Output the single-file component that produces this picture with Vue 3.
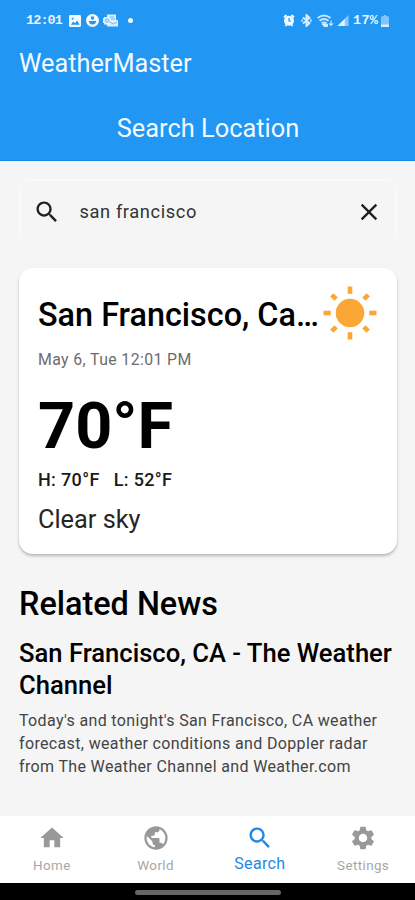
<script setup>
const rays = [0, 45, 90, 135, 180, 225, 270, 315]
const paths = {
  home: 'M10 20v-6h4v6h5v-8h3L12 3 2 12h3v8z',
  world: 'M12 2C6.48 2 2 6.48 2 12s4.48 10 10 10 10-4.48 10-10S17.52 2 12 2zm-1 17.93c-3.95-.49-7-3.85-7-7.93 0-.62.08-1.21.21-1.79L9 15v1c0 1.1.9 2 2 2v1.93zm6.9-2.54c-.26-.81-1-1.39-1.9-1.39h-1v-3c0-.55-.45-1-1-1H8v-2h2c.55 0 1-.45 1-1V7h2c1.1 0 2-.9 2-2v-.41c2.93 1.19 5 4.06 5 7.41 0 2.08-.8 3.97-2.1 5.39z',
  search: 'M15.5 14h-.79l-.28-.27C15.41 12.59 16 11.11 16 9.5 16 5.91 13.09 3 9.5 3S3 5.91 3 9.5 5.91 16 9.5 16c1.61 0 3.09-.59 4.23-1.57l.27.28v.79l5 4.99L20.49 19l-4.99-5zm-6 0C7.01 14 5 11.99 5 9.5S7.01 5 9.5 5 14 7.01 14 9.5 11.99 14 9.5 14z',
  settings: 'M19.14 12.94c.04-.3.06-.61.06-.94 0-.32-.02-.64-.07-.94l2.03-1.58c.18-.14.23-.41.12-.61l-1.92-3.32c-.12-.22-.37-.29-.59-.22l-2.39.96c-.5-.38-1.03-.7-1.62-.94l-.36-2.54c-.04-.24-.24-.41-.48-.41h-3.84c-.24 0-.43.17-.47.41l-.36 2.54c-.59.24-1.13.57-1.62.94l-2.39-.96c-.22-.08-.47 0-.59.22L2.74 8.87c-.12.21-.08.47.12.61l2.03 1.58c-.05.3-.09.63-.09.94s.02.64.07.94l-2.03 1.58c-.18.14-.23.41-.12.61l1.92 3.32c.12.22.37.29.59.22l2.39-.96c.5.38 1.03.7 1.62.94l.36 2.54c.05.24.24.41.48.41h3.84c.24 0 .44-.17.47-.41l.36-2.54c.59-.24 1.13-.56 1.62-.94l2.39.96c.22.08.47 0 .59-.22l1.92-3.32c.12-.22.07-.47-.12-.61l-2.01-1.58zM12 15.6c-1.98 0-3.6-1.62-3.6-3.6s1.62-3.6 3.6-3.6 3.6 1.62 3.6 3.6-1.62 3.6-3.6 3.6z',
  close: 'M19 6.41 17.59 5 12 10.59 6.41 5 5 6.41 10.59 12 5 17.59 6.41 19 12 13.41 17.59 19 19 17.59 13.41 12z',
}
const tabs = [
  { label: 'Home', icon: paths.home },
  { label: 'World', icon: paths.world },
  { label: 'Search', icon: paths.search, active: true },
  { label: 'Settings', icon: paths.settings },
]
</script>

<template>
  <div class="screen">
    <header class="header">
      <div class="status">
        <div class="status-left">
          <span class="clock">12:01</span>
          <svg class="st-photo" viewBox="0 0 13 13"><rect width="13" height="13" rx="1.5" fill="#f3faff" /><path d="M2 10.5 4.5 7l2 2L9 6l2.5 4.5zM3 3h2v2H3z" fill="#2196f3" /></svg>
          <svg class="st-face" viewBox="0 0 13 13"><circle cx="6.5" cy="6.5" r="6.5" fill="#f3faff" /><path d="M5 2.5h3v3H5zM2.8 7h7.4c0 2-1.6 3.4-3.7 3.4S2.8 9 2.8 7z" fill="#2196f3" /></svg>
          <svg class="st-mail" viewBox="0 0 15 13"><path d="M4 .5h9v5l2 1v6H4.500l-1-2H1V9H0V4h1V3h3z" fill="#d9eeff" /><circle cx="4" cy="6.5" r="1.5" fill="none" stroke="#5fb3f7" /><path d="M7 3h4M8 5h4M6.500 8l4 2 3.500-2" fill="none" stroke="#5fb3f7" stroke-width=".9" /></svg>
          <i class="dot"></i>
        </div>
        <div class="status-right">
          <svg class="st-alarm" viewBox="0 0 12 13"><path d="M1 3.2 3.5 1M11 3.2 8.500 1M2.500 12l1.500-2M9.500 12 8 10" stroke="#f3faff" stroke-width="1.800" /><circle cx="6" cy="6.800" r="5" fill="#f3faff" /><path d="M6 4v3h2" fill="none" stroke="#2196f3" stroke-width="1.200" /></svg>
          <svg class="st-bt" viewBox="0 0 11 13"><path d="M2 3.500 8.500 9 5.500 12V1l3 3L2 9.500M.3 6.500h1.600M9 6.500h1.700" fill="none" stroke="#d9eeff" stroke-width="1.900" /></svg>
          <svg class="st-wifi" viewBox="0 0 17 13"><path d="M.5 4q6.500-5 13 0M2.500 6.800q4.500-3.500 9 0M4.700 9.300q2.300-1.800 4.600 0" fill="none" stroke="#c5e6ff" stroke-width="1.900" /><path d="m7 12.500-2-2.500h5.500v2.500zM14 6.500v5M12 9.500l2 2 2-2" fill="#d5edff" stroke="#d5edff" /></svg>
          <svg class="st-signal" viewBox="0 0 12 12"><path d="M12 0v12H0z" fill="#8dcafb" /><path d="M8 4v8H0z" fill="#e1f2ff" /></svg>
          <span class="percent">17%</span>
          <svg class="st-battery" viewBox="0 0 8 12"><path d="M2 1h1V0h2v1h1q2 0 2 2v9H0V3q0-2 2-2z" fill="#83c5fb" /><path d="M0 9.500h8V12H0z" fill="#d5edff" /></svg>
        </div>
      </div>
      <div class="app-name">WeatherMaster</div>
      <div class="page-title">Search Location</div>
    </header>

    <main class="content">
      <div class="search-field">
        <svg class="icon" viewBox="0 0 24 24"><path :d="paths.search" /></svg>
        <span class="query">san francisco</span>
        <svg class="icon" viewBox="0 0 24 24"><path :d="paths.close" /></svg>
      </div>

      <section class="card">
        <div class="card-head">
          <h1>San Francisco, Ca…</h1>
          <svg class="sun" viewBox="0 0 54 54">
            <circle cx="27" cy="27" r="14.300" />
            <rect v-for="a in rays" :key="a" x="24.700" :y="a % 90 ? 1.200 : .500" width="4.600" :height="a % 90 ? 6.200 : 7.300" :transform="`rotate(${a} 27 27)`" />
          </svg>
        </div>
        <div class="date">May 6, Tue 12:01 PM</div>
        <div class="temp">70°F</div>
        <div class="range"><span>H: 70°F</span><span>L: 52°F</span></div>
        <div class="sky">Clear sky</div>
      </section>

      <section class="news">
        <h2>Related News</h2>
        <h3>San Francisco, CA - The Weather Channel</h3>
        <p>Today's and tonight's San Francisco, CA weather forecast, weather conditions and Doppler radar from The Weather Channel and Weather.com</p>
      </section>
    </main>

    <nav class="tabs">
      <div v-for="t in tabs" :key="t.label" class="tab" :class="{ active: t.active }">
        <svg viewBox="0 0 24 24"><path :d="t.icon" /></svg>
        <span>{{ t.label }}</span>
      </div>
    </nav>
    <div class="gesture"><i></i></div>
  </div>
</template>

<style>
body { margin: 0; }
</style>

<style scoped>
* { box-sizing: border-box; }
.screen { display: flex; flex-direction: column; width: 415px; height: 900px; overflow: hidden; background: #f5f5f5; font-family: Roboto, sans-serif; color: #000; }
.header { flex: none; height: 161px; background: #2196f3; border-bottom: 1px solid #1588ed; color: #f3faff; }
.status { height: 42px; display: flex; justify-content: space-between; align-items: center; padding: 0 26px 1px; }
.status-left, .status-right { display: flex; align-items: center; height: 14px; }
.clock, .percent { font: 700 13.500px/14px "Liberation Mono", monospace; letter-spacing: -.9px; color: #e4f3ff; padding-top: 1px; }
.clock { width: 36px; }
.percent { width: 26px; margin-left: 4px; letter-spacing: .3px; }
.st-photo { width: 12px; height: 12px; margin-left: 7px; }
.st-face { width: 13px; height: 13px; margin-left: 5px; }
.st-mail { width: 15px; height: 13px; margin-left: 4px; }
.dot { width: 5px; height: 5px; margin-left: 10px; border-radius: 50%; background: #f3faff; }
.st-alarm { width: 12px; height: 13px; }
.st-bt { width: 11px; height: 13px; margin-left: 6px; }
.st-wifi { width: 17px; height: 13px; margin-left: 5px; }
.st-signal { width: 12px; height: 11px; margin-left: 3px; }
.st-battery { width: 8px; height: 12px; margin-left: 2px; }
.app-name { padding-left: 19px; font-size: 25.300px; line-height: 44px; }
.page-title { margin-top: 20px; padding-left: 1px; text-align: center; font-size: 25.400px; line-height: 44px; }
.content { flex: 1; min-height: 0; padding: 18px 18px 0 19px; }
.search-field { display: flex; align-items: center; height: 67px; padding: 0 12px 2px 11.500px; border: 2px solid #f9f9f9; border-bottom-color: #f6f6f6; border-radius: 9px; }
.icon { width: 28px; height: 28px; fill: #202020; }
.query { flex: 1; margin-left: 19px; font-size: 18.300px; letter-spacing: .6px; color: #333; }
.card { height: 286px; margin-top: 22px; padding: 18px 20px 0 19px; border-radius: 14px; background: #fff; box-shadow: 0 2px 3px rgba(0, 0, 0, .25); }
.card-head { display: flex; align-items: center; height: 54px; }
h1, h2, h3, p { margin: 0; }
h1 { flex: 1; min-width: 0; white-space: nowrap; font-size: 32.400px; line-height: 42px; font-weight: 500; padding-top: 4px; }
.sun { flex: none; width: 54px; height: 54px; fill: #fba736; }
.date { margin-top: 9px; font-size: 15.800px; line-height: 22px; letter-spacing: .4px; color: #6c6c6c; }
.temp { margin-top: 17px; font-size: 64.800px; line-height: 76px; font-weight: 700; }
.range { display: flex; gap: 14px; margin-top: 5px; font-size: 18px; line-height: 22px; letter-spacing: .35px; font-weight: 500; color: #1a1a1a; }
.sky { margin-top: 12px; font-size: 25.300px; line-height: 34px; color: #262626; }
.news { padding-top: 30px; }
h2 { font-size: 32.400px; line-height: 40px; font-weight: 500; }
h3 { margin-top: 13px; font-size: 25.600px; line-height: 32px; font-weight: 500; margin-right: -4px; }
p { margin-top: 8px; font-size: 16px; line-height: 23px; letter-spacing: .35px; color: #444; }
.tabs { flex: none; display: flex; height: 67px; background: #fff; }
.tab { flex: none; width: 25%; display: flex; flex-direction: column; align-items: center; padding-top: 8px; color: #999; font-size: 13.400px; letter-spacing: .4px; }
.tab svg { width: 28px; height: 28px; fill: currentColor; }
.tab span { line-height: 20px; margin-top: 4px; color: #a6a6a6; }
.tab.active { color: #2089e5; font-size: 16px; letter-spacing: .35px; padding-left: 1px; }
.tab.active span { margin-top: 2px; color: inherit; }
.gesture { flex: none; display: flex; justify-content: center; height: 17px; padding-top: 7px; background: #000; }
.gesture i { width: 146px; height: 5px; border-radius: 3px; background: #666; }
</style>
